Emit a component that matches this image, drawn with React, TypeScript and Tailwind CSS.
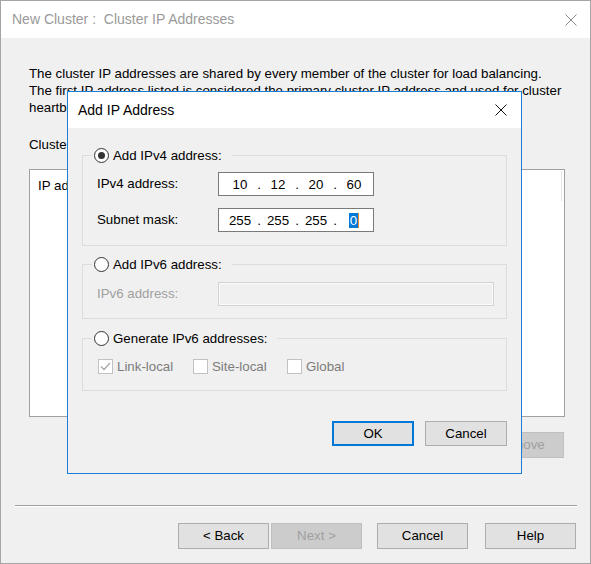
const font = { fontFamily: '"Liberation Sans", Arial, sans-serif' };

const CloseIcon = ({ color }: { color: string }) => (
  <svg width="12" height="12" viewBox="0 0 12 12">
    <path d="M0.5 0.5 L11.5 11.5 M11.5 0.5 L0.5 11.5" stroke={color} strokeWidth="1" fill="none" />
  </svg>
);

const Radio = ({ checked }: { checked?: boolean }) => (
  <span className="flex h-[15px] w-[15px] items-center justify-center rounded-full border border-[#333333] bg-white">
    {checked && <span className="h-[7px] w-[7px] rounded-full bg-[#333333]" />}
  </span>
);

const Check = ({ checked, label, width }: { checked?: boolean; label: string; width: string }) => (
  <div className={`flex items-center gap-[4px] ${width}`}>
    <span className="flex h-[15px] w-[15px] items-center justify-center border border-[#c2c2c2] bg-white">
      {checked && (
        <svg width="13" height="13" viewBox="0 0 13 13">
          <path d="M2 6.5 L5 9.5 L11 3" stroke="#a8a8a8" strokeWidth="1.3" fill="none" />
        </svg>
      )}
    </span>
    <span className="text-[#7c7c7c]">{label}</span>
  </div>
);

const Group = ({
  label,
  checked,
  className,
  children,
}: {
  label: string;
  checked?: boolean;
  className: string;
  children: React.ReactNode;
}) => (
  <div className={`relative mx-[14px] border border-[#dcdcdc] ${className}`}>
    <div className="absolute -top-[9px] left-[9px] flex items-center gap-[4px] bg-[#f0f0f0] pl-[2px] pr-[10px] leading-[17px]">
      <Radio checked={checked} />
      <span>{label}</span>
    </div>
    {children}
  </div>
);

const IpBox = ({ parts, selectLast }: { parts: string[]; selectLast?: boolean }) => (
  <div className="flex h-[24px] w-[156px] items-center border border-[#7a7a7a] bg-white pl-[6px] leading-[15px]">
    {parts.map((p, i) => (
      <div key={i} className="flex items-center">
        {i > 0 && <span className="w-[8px] text-center">.</span>}
        <span className="flex w-[30px] justify-center">
          {selectLast && i === 3 ? (
            <span className="flex items-center">
              <span className="bg-[#0078d7] px-[1px] text-white">{p}</span>
              <span className="h-[15px] w-[1px] bg-[#e88a2c]" />
            </span>
          ) : (
            p
          )}
        </span>
      </div>
    ))}
  </div>
);

const Button = ({
  label,
  className,
}: {
  label: string;
  className: string;
}) => <div className={`flex items-center justify-center ${className}`}>{label}</div>;

export default function App() {
  return (
    <div
      className="relative flex h-[564px] w-[591px] flex-col border border-[#a5a5a5] bg-[#f0f0f0] text-[13.3px] text-black"
      style={font}
    >
      {/* wizard title bar */}
      <div className="flex h-[37px] items-center justify-between bg-white pl-[11px] pr-[13px]">
        <span className="whitespace-pre text-[14px] text-[#9a9a9a]">New Cluster :  Cluster IP Addresses</span>
        <CloseIcon color="#8a8a8a" />
      </div>

      {/* wizard body */}
      <div className="flex flex-1 flex-col">
        <div className="mt-[27px] pl-[28px] leading-[17px]">
          <div className="whitespace-nowrap">The cluster IP addresses are shared by every member of the cluster for load balancing.</div>
          <div className="whitespace-nowrap">The first IP address listed is considered the primary cluster IP address and used for cluster</div>
          <div className="whitespace-nowrap">heartbeats.</div>
        </div>
        <div className="mt-[20px] pl-[28px] leading-[17px]">Cluster IP addresses:</div>

        <div className="ml-[28px] mt-[16px] h-[248px] w-[536px] border border-[#a0a0a0] bg-white">
          <div className="flex h-[32px] items-center">
            <span className="w-[170px] pl-[8px]">IP address</span>
            <span className="w-[180px] pl-[8px]">Subnet mask</span>
            <span className="ml-auto mr-[2px] h-[30px] w-[1px] bg-[#e5e5e5]" />
          </div>
        </div>

        <div className="mt-[15px] flex justify-end pr-[26px]">
          <Button label="Remove" className="h-[26px] w-[88px] border border-[#bfbfbf] bg-[#cccccc] text-[#a0a0a0]" />
        </div>

        <div className="ml-[14px] mt-[47px] w-[562px] border-t border-b border-t-[#a0a0a0] border-b-white" />

        <div className="mt-[16px] flex pl-[177px]">
          <Button label="< Back" className="h-[26px] w-[91px] border border-[#adadad] bg-[#e1e1e1]" />
          <Button label="Next >" className="ml-[2px] h-[26px] w-[91px] border border-[#bfbfbf] bg-[#cccccc] text-[#a0a0a0]" />
          <Button label="Cancel" className="ml-[15px] h-[26px] w-[91px] border border-[#adadad] bg-[#e1e1e1]" />
          <Button label="Help" className="ml-[17px] h-[26px] w-[91px] border border-[#adadad] bg-[#e1e1e1]" />
        </div>
      </div>

      {/* Add IP Address dialog */}
      <div className="absolute left-[66px] top-[90px] flex h-[383px] w-[455px] flex-col border border-[#1a7ed6] bg-[#f0f0f0]">
        <div className="flex h-[36px] items-center justify-between bg-white pl-[10px] pr-[14px]">
          <span className="text-[14px]">Add IP Address</span>
          <CloseIcon color="#111111" />
        </div>

        <Group label="Add IPv4 address:" checked className="mt-[27px] h-[91px]">
          <div className="flex flex-col gap-[12px] pt-[16px]">
            <div className="flex items-center">
              <span className="w-[135px] pl-[14px]">IPv4 address:</span>
              <IpBox parts={["10", "12", "20", "60"]} />
            </div>
            <div className="flex items-center">
              <span className="w-[135px] pl-[14px]">Subnet mask:</span>
              <IpBox parts={["255", "255", "255", "0"]} selectLast />
            </div>
          </div>
        </Group>

        <Group label="Add IPv6 address:" className="mt-[18px] h-[55px]">
          <div className="flex items-center pt-[17px]">
            <span className="w-[135px] pl-[14px] text-[#a0a0a0]">IPv6 address:</span>
            <div className="h-[24px] w-[276px] border border-[#d2d2d2] bg-[#f0f0f0] shadow-[inset_0_0_0_1px_#fafafa]" />
          </div>
        </Group>

        <Group label="Generate IPv6 addresses:" className="mt-[19px] h-[53px]">
          <div className="flex pl-[15px] pt-[18px]">
            <Check checked label="Link-local" width="w-[95px]" />
            <Check label="Site-local" width="w-[94px]" />
            <Check label="Global" width="w-[80px]" />
          </div>
        </Group>

        <div className="mt-[30px] flex justify-end gap-[11px] pr-[14px]">
          <Button label="OK" className="h-[25px] w-[82px] border-2 border-[#0078d7] bg-[#e1e1e1]" />
          <Button label="Cancel" className="h-[25px] w-[82px] border border-[#adadad] bg-[#e1e1e1]" />
        </div>
      </div>
    </div>
  );
}
